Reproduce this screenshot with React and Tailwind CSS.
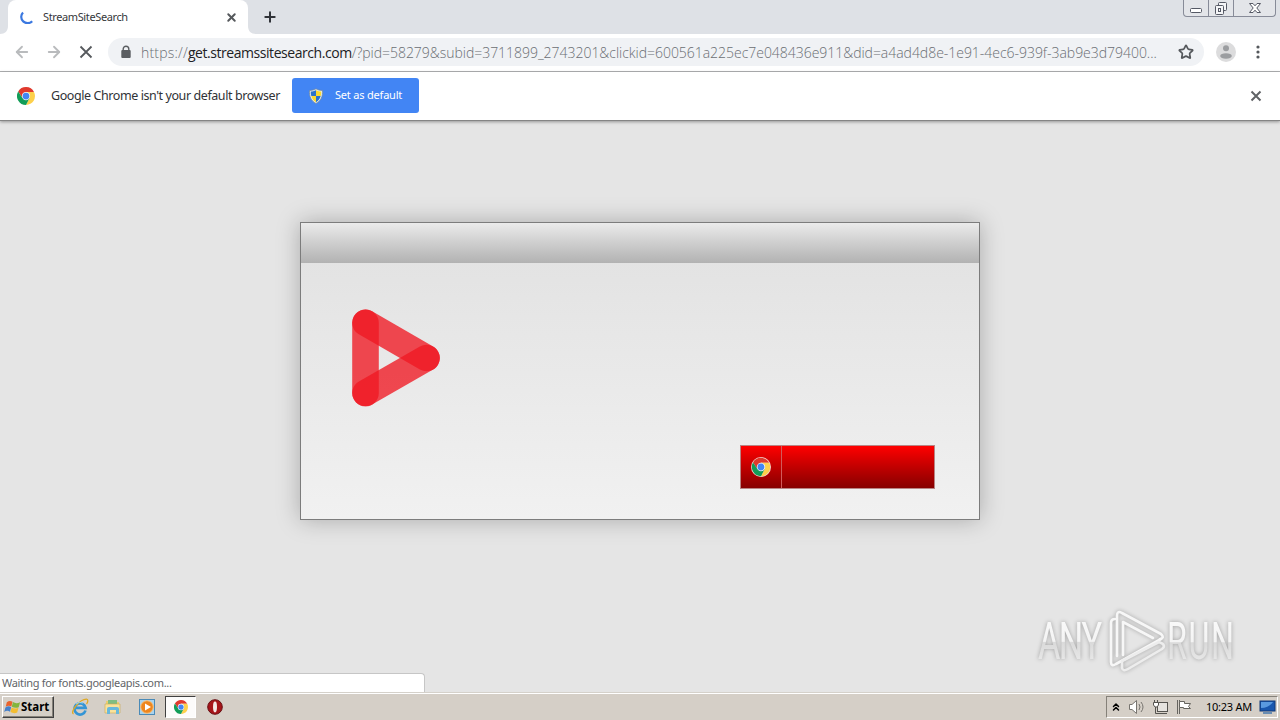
import React from 'react';
import { X, Plus, ArrowLeft, ArrowRight, Star, ChevronsUp } from 'lucide-react';

const ChromeLogo = ({ className, ring }) => (
  <svg viewBox="0 0 48 48" className={className}>
    {ring && <circle cx="24" cy="24" r="24" fill="#f3d5d0" />}
    <g transform={ring ? 'translate(2 2) scale(.917)' : undefined}>
      <path d="M24 13H45.3A24 24 0 0 0 3.2 12L14.5 29.5Z" fill="#e0392d" />
      <path d="M33.5 29.5 24 48A24 24 0 0 0 45.3 13H24Z" fill="#fdd04b" />
      <path d="M14.5 29.5 3.2 12A24 24 0 0 0 24 48L33.5 29.5Z" fill="#129d58" />
      <circle cx="24" cy="24" r="11" fill="#f6f6f6" />
      <circle cx="24" cy="24" r="9" fill="#4285f4" />
    </g>
  </svg>
);

const Shield = () => (
  <svg viewBox="0 0 16 16" className="w-4 h-4">
    <path d="M8 .8C6 2 3.6 2.5 1.5 2.4 1 8 3 13 8 15.4 13 13 15 8 14.5 2.4 12.4 2.5 10 2 8 .8Z" fill="#e3eaee" stroke="#6f8496" strokeWidth=".7" />
    <path d="M8 2.3C6.2 3.2 4.5 3.5 2.8 3.5 2.6 5 2.8 6.6 3.3 8H8Z" fill="#2a72cc" />
    <path d="M8 2.3C9.8 3.2 11.5 3.5 13.2 3.5 13.4 5 13.2 6.6 12.7 8H8Z" fill="#fbd92f" />
    <path d="M3.3 8H8V14.2C5.6 12.8 4.2 11 3.3 8Z" fill="#fbd92f" />
    <path d="M12.7 8H8V14.2C10.4 12.8 11.8 11 12.7 8Z" fill="#2a72cc" />
  </svg>
);

const TabStrip = () => (
  <div className="flex h-[34px] bg-[#dee1e6]">
    <svg viewBox="0 0 8 34" className="w-2 h-[34px]">
      <path d="M8 26V34H0C5 34 8 31 8 26Z" fill="#fff" />
    </svg>
    <div className="flex w-[240px] h-[34px] items-center rounded-t-lg bg-white pl-[12px] pr-[10px]">
      <svg viewBox="0 0 14 14" className="w-[14px] h-[14px] shrink-0" fill="none">
        <path d="M3 2.4A6 6 0 0 0 12.2 11.2" stroke="#3b78e0" strokeWidth="2.2" />
      </svg>
      <span className="ml-[9px] flex-1 whitespace-nowrap text-[11px] tracking-[-0.38px] text-[#36383b]">StreamSiteSearch</span>
      <X className="w-[13px] h-[13px] text-[#55585c]" strokeWidth={3.6} />
    </div>
    <svg viewBox="0 0 8 34" className="w-2 h-[34px]">
      <path d="M0 26V34H8C3 34 0 31 0 26Z" fill="#fff" />
    </svg>
    <Plus className="mt-[9px] ml-[6px] w-4 h-4 text-[#303338]" strokeWidth={3} />
    <div className="ml-auto mr-[4px] flex h-[17px] w-[93px] rounded-b-[4px] border border-t-0 border-[#878b98] bg-[#e3e5e9]">
      <div className="w-[25px] border-r border-[#878b98]">
        <svg viewBox="0 0 24 16" className="w-6 h-4">
          <rect x="6.5" y="8.5" width="11" height="4" rx="1" fill="#fff" stroke="#555965" />
        </svg>
      </div>
      <div className="w-[25px] border-r border-[#878b98]">
        <svg viewBox="0 0 24 16" className="w-6 h-4" fill="#f4f5f7" stroke="#555965">
          <rect x="9.5" y="2.5" width="8" height="8" rx="1" />
          <rect x="6.5" y="5.5" width="8" height="9" rx="1" />
          <rect x="9.5" y="8.5" width="2" height="3" />
        </svg>
      </div>
      <div className="flex-1">
        <svg viewBox="0 0 40 16" className="w-10 h-4">
          <path d="M15.5 3.5H19L21 5.8 23 3.5H26.5L22.8 8 26.5 12.5H23L21 10.2 19 12.5H15.5L19.2 8Z" fill="#fff" stroke="#555965" />
        </svg>
      </div>
    </div>
  </div>
);

const Toolbar = () => (
  <div className="flex h-[38px] items-center border-b border-[#b1b2b4] bg-white pl-[13px] pb-px">
    <ArrowLeft className="w-[18px] h-[18px] text-[#b9bbbd]" strokeWidth={2.4} />
    <ArrowRight className="ml-[14px] w-[18px] h-[18px] text-[#b9bbbd]" strokeWidth={2.4} />
    <svg viewBox="0 0 14 14" className="ml-4 w-[14px] h-[14px]">
      <path d="M1.5 1.5 12.5 12.5M12.5 1.5 1.5 12.5" stroke="#56595d" strokeWidth="1.8" />
    </svg>
    <div className="ml-[15px] flex h-7 w-[1096px] items-center rounded-full bg-[#f0f2f5] pl-3">
      <svg viewBox="0 0 12 14" className="w-3 h-[14px]">
        <path d="M3.2 6V4A2.8 2.8 0 0 1 8.8 4V6" fill="none" stroke="#5b5e62" strokeWidth="1.4" />
        <rect x="1.3" y="5" width="9.4" height="8" rx="1" fill="#5b5e62" />
      </svg>
      <div className="ml-[9px] w-[1020px] whitespace-nowrap font-['Open_Sans',sans-serif] text-[14px] font-light text-[#6a6e73]">
        <span className="tracking-[0.2px]">https://</span>
        <span className="font-normal tracking-[-0.45px] text-[#202124]">get.streamssitesearch.com</span>
        <span className="tracking-[-0.03px]">/?pid=58279&amp;subid=3711899_2743201&amp;clickid=600561a225ec7e048436e911&amp;did=a4ad4d8e-1e91-4ec6-939f-3ab9e3d79400...</span>
      </div>
      <Star className="ml-auto mr-[10px] w-4 h-4 shrink-0 text-[#55585c]" strokeWidth={2.6} />
    </div>
    <svg viewBox="0 0 20 20" className="ml-3 w-5 h-5">
      <circle cx="10" cy="10" r="10" fill="#dcdcdd" />
      <circle cx="10" cy="6.3" r="3" fill="#9b9da0" />
      <ellipse cx="10" cy="14" rx="5.8" ry="2.7" fill="#9b9da0" />
    </svg>
    <svg viewBox="0 0 4 14" className="ml-5 w-1 h-[14px]" fill="#55585c">
      <circle cx="2" cy="2" r="1.6" />
      <circle cx="2" cy="7" r="1.6" />
      <circle cx="2" cy="12" r="1.6" />
    </svg>
  </div>
);

const InfoBar = () => (
  <div className="relative flex h-[49px] items-center border-b border-[#858585] bg-white pl-[17px] pr-[18px] shadow-[0_1px_3px_rgba(0,0,0,0.35)]">
    <ChromeLogo className="w-[18px] h-[18px]" />
    <span className="ml-4 w-[241px] whitespace-nowrap text-[12.5px] tracking-[-0.42px] text-[#303236]">Google Chrome isn't your default browser</span>
    <button className="mb-px flex h-[35px] w-[127px] items-center rounded-[3px] bg-[#4285f4] pl-4 text-[11px] text-white">
      <Shield />
      <span className="ml-[11px] whitespace-nowrap tracking-[-0.2px]">Set as default</span>
    </button>
    <svg viewBox="0 0 12 12" className="ml-auto w-[12px] h-[12px]">
      <path d="M1.5 1.5 10.5 10.5M10.5 1.5 1.5 10.5" stroke="#606366" strokeWidth="2" />
    </svg>
  </div>
);

const PlayLogo = () => (
  <svg viewBox="0 0 88 98" className="w-[88px] h-[98px]" fill="none" strokeLinecap="round" strokeWidth="26.6" stroke="#f01822">
    <path d="M13.5 13.8V84" opacity=".78" />
    <path d="M13.5 13.8 74.5 49" opacity=".78" />
    <path d="M74.5 49 13.5 84" opacity=".78" />
  </svg>
);

const Popup = () => (
  <div className="flex h-[298px] w-[680px] flex-col border border-[#7c7c7c] bg-gradient-to-b from-[#e1e1e1] to-[#f1f1f1] shadow-[0_0_22px_rgba(0,0,0,0.26)]">
    <div className="h-10 bg-gradient-to-b from-[#ebebeb] to-[#b2b2b2]" />
    <div className="pt-[46px] pl-[51px]">
      <PlayLogo />
    </div>
    <button className="mt-auto mb-[30px] mr-[44px] flex h-11 w-[195px] self-end border border-[#b98484] bg-gradient-to-b from-[#ff0000] to-[#870000]">
      <span className="flex h-full w-[41px] items-center justify-center border-r border-[#d25b5b]">
        <ChromeLogo ring className="w-5 h-5" />
      </span>
    </button>
  </div>
);

const Watermark = () => (
  <svg viewBox="0 0 250 76" className="absolute left-[1029px] top-[602px] w-[250px] h-[76px]">
    <defs>
      <linearGradient id="mark" x1="0" y1="0" x2="0" y2="1">
        <stop offset="0" stopColor="#fbfbfb" />
        <stop offset=".5" stopColor="#f4f4f4" />
        <stop offset=".52" stopColor="#dadada" />
        <stop offset="1" stopColor="#f0f0f0" />
      </linearGradient>
    </defs>
    <g className="drop-shadow-[0_0_2px_rgba(0,0,0,0.3)]">
      <g fill="url(#mark)" className="font-['Roboto',sans-serif]" fontSize="52">
        <text transform="translate(9 57) scale(.66 1)" textLength="97">ANY</text>
        <text transform="translate(138 57) scale(.62 1)" textLength="108">RUN</text>
      </g>
      <g fill="none" stroke="#f7f7f7" strokeWidth="2.6" strokeLinejoin="round" strokeLinecap="round">
        <path d="M86 17Q82 17 82 21V60Q82 65 87 62L132 37" />
        <path d="M88 54V14Q88 8 93 11L132 32Q136 36 131 37" />
        <path d="M94 53V20L124 36" />
        <path d="M93 59V66Q94 70 99 67L133 47Q138 43 130 40Z" stroke="#ededed" />
      </g>
    </g>
  </svg>
);

const Taskbar = () => (
  <div className="flex h-[28px] items-center border-t border-[#d5d1ca] bg-[#d5cfc7] pl-[2px] pr-[2px] pb-px shadow-[inset_0_1px_0_#fff]">
    <button className="mt-[2px] flex h-[22px] w-[52px] items-center border border-t-white border-l-white border-r-[#404040] border-b-[#404040] bg-[#d5cfc7] pl-px shadow-[inset_-1px_-1px_0_#858179]">
      <svg viewBox="0 0 18 16" className="w-[17px] h-[16px] shrink-0">
        <path d="M3 3Q6 .5 9 2.5L7.8 7.6Q5 5.6 1.8 7.8Z" fill="#e9632c" />
        <path d="M9.4 2.8Q13 5 17 3L15.6 8.2Q12 9.6 8.3 7.8Z" fill="#83b53c" />
        <path d="M1.5 8.4Q5 6.2 7.6 8.2L6.3 13Q3.5 11 .2 13.2Z" fill="#4680ca" />
        <path d="M8.1 8.5Q12 10.4 15.3 8.9L14 13.8Q10.5 15.4 6.8 13.3Z" fill="#f3bd32" />
      </svg>
      <span className="text-[11.5px] font-bold text-black">Start</span>
    </button>
    <svg viewBox="0 0 18 18" className="ml-[17px] mt-px w-[18px] h-[18px]" fill="none">
      <path d="M14.5 12.5A5.6 5.6 0 1 1 14.6 9.8H5" stroke="#3495d5" strokeWidth="2.7" />
      <path d="M2.5 16C-1.5 14 9 1 15.5 1.2 17.5 1.4 17 4 15.5 6" stroke="#dfa923" strokeWidth="1.3" />
      <path d="M5 6Q8 3.2 12 5" stroke="#9bd7f1" strokeWidth="1" />
    </svg>
    <svg viewBox="0 0 18 18" className="ml-[15px] mt-px w-[18px] h-[18px]">
      <path d="M2 3H7L8 4H15V15H2Z" fill="#eace70" />
      <path d="M4 2H13V10H4Z" fill="#80bd82" />
      <path d="M1 6H16V15H1Z" fill="#f9e29a" stroke="#caa956" strokeWidth=".6" />
      <path d="M3 16V11Q3 9 5 9H13Q15 9 15 11V16H12V12H6V16Z" fill="#68b8dc" />
    </svg>
    <svg viewBox="0 0 18 18" className="ml-4 mt-px w-[18px] h-[18px]">
      <rect x="1.5" y="1.5" width="15" height="15" fill="#a9d3ee" stroke="#4a8ab7" />
      <circle cx="9" cy="9" r="6.3" fill="#ee861d" stroke="#f8c27c" />
      <path d="M7 5.5 13 9 7 12.5Z" fill="#fff" />
    </svg>
    <div className="ml-[9px] mt-[2px] flex h-[22px] w-[31px] items-center justify-center border border-t-[#404040] border-l-[#404040] border-r-white border-b-white bg-[#fcfbfa]">
      <ChromeLogo className="w-[14px] h-[14px]" />
    </div>
    <svg viewBox="0 0 16 16" className="ml-[11px] mt-[2px] w-4 h-4">
      <circle cx="8" cy="8" r="7.3" fill="#a61419" stroke="#681014" />
      <ellipse cx="8" cy="8" rx="2" ry="5.4" fill="#f4e7e5" />
    </svg>
    <div className="ml-auto mt-[2px] flex h-[22px] w-[172px] items-center border border-t-[#858179] border-l-[#858179] border-r-white border-b-white pl-[3px]">
      <ChevronsUp className="mb-px w-[12px] h-[14px] text-black" strokeWidth={3} />
      <svg viewBox="0 0 18 16" className="ml-[6px] w-[18px] h-4" fill="none" stroke="#77746f">
        <path d="M1.5 5.5H4L8.5 1.5V14.5L4 10.5H1.5Z" fill="#fff" />
        <path d="M11 5Q13 8 11 11M13 3Q17 8 13 13" />
      </svg>
      <svg viewBox="0 0 17 16" className="ml-[6px] w-[17px] h-4" fill="#fff" stroke="#55534f">
        <rect x="5.5" y="3.5" width="10" height="9" fill="#e6e3df" />
        <path d="M7 14.5H15M3.5 7V14.5H8" fill="none" />
        <path d="M1.5 3.5H6.5V6L5 8H3L1.5 6ZM2.5 1V3M5.5 1V3" />
      </svg>
      <svg viewBox="0 0 17 16" className="ml-[6px] w-[17px] h-4" fill="#fff" stroke="#66645f">
        <path d="M2.5 1V15M4.5 1V15" />
        <path d="M4.5 2.5H9.5V4.5H15.5L13.5 7.5 15.5 9.5H8.5V8.5H4.5Z" />
      </svg>
      <span className="ml-[14px] w-[47px] whitespace-nowrap text-[11px] tracking-[-0.25px] text-black">10:23 AM</span>
      <svg viewBox="0 0 17 16" className="ml-[6px] w-[17px] h-4">
        <rect x="1" y="2" width="15" height="10" fill="#1957ae" stroke="#103977" />
        <path d="M2 3H14Q10 9 2 9Z" fill="#5a9ae0" />
        <path d="M4 14H13" stroke="#4577ad" strokeWidth="1.5" />
      </svg>
    </div>
  </div>
);

const App = () => (
  <div className="flex h-screen w-screen flex-col overflow-hidden bg-[#e5e5e5] font-['Noto_Sans',sans-serif]">
    <TabStrip />
    <Toolbar />
    <InfoBar />
    <main className="flex flex-1 flex-col items-center pt-[101px]">
      <Popup />
      <div className="mt-auto flex h-[19px] w-[425px] items-center self-start rounded-tr-[4px] border-t border-r border-[#c6c6c6] bg-white pl-[2px] text-[11px] tracking-[-0.31px] text-[#626468]">
        Waiting for fonts.googleapis.com...
      </div>
    </main>
    <Watermark />
    <Taskbar />
  </div>
);

export default App;
